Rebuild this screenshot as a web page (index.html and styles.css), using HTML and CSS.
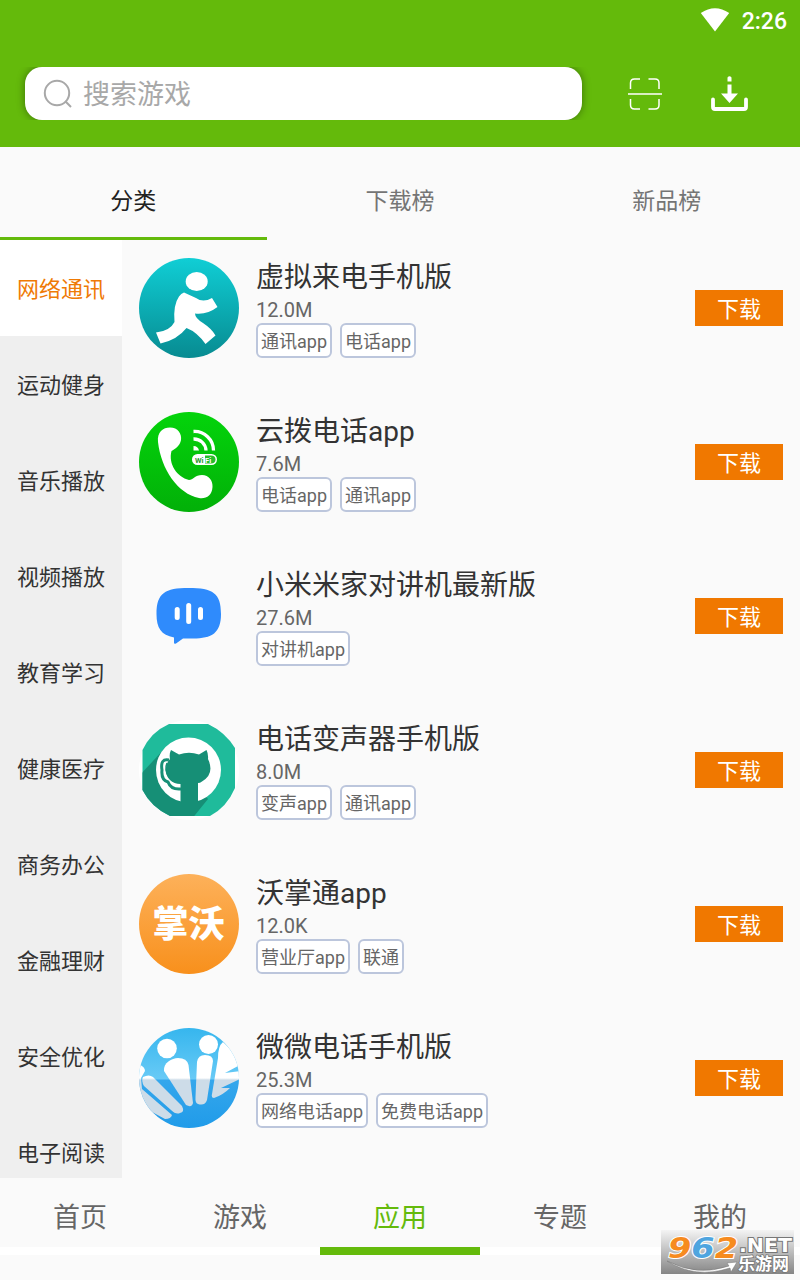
FILE: index.html
```html
<!DOCTYPE html>
<html lang="zh-CN">
<head>
    <meta charset="utf-8">
    <title>应用</title>
    <link rel="stylesheet" href="styles.css">
</head>
<body>
    <header class="header">
        <div class="status">
            <svg width="30" height="24" viewBox="0 0 30 24"><path d="M.8 5Q15-4.500 29.200 5L15 23.500z" fill="#fff"/></svg>
            <span class="clock">2:26</span>
        </div>
        <div class="toolbar">
            <div class="search">
                <svg width="30" height="30" viewBox="0 0 30 30" fill="none" stroke="#a8a8a8" stroke-width="2"><circle cx="14" cy="14" r="12.200"/><path d="M22.300 22.300L28 28"/></svg>
                <span class="hint">搜索游戏</span>
            </div>
            <svg class="scan" width="34" height="34" viewBox="0 0 34 34" fill="none" stroke="#fff" stroke-width="1.500"><path d="M2.500 12V6q0-4 4-4H12M20.500 2H27q4 0 4 4v6M2.500 22v6q0 4 4 4H12M20.500 32H27q4 0 4-4v-6M0 17h34"/></svg>
            <svg class="save" width="38" height="38" viewBox="0 0 38 38"><path d="M2 24.500v7.500q0 2 2 2h29q2 0 2-2v-7.500" fill="none" stroke="#fff" stroke-width="3.800" stroke-linecap="round"/><path d="M16.500 2.500q2-2.500 4 0v4h-4zM16.500 9.500h4v9h6.500L18.500 28l-8.500-9.500h6.500z" fill="#fff"/></svg>
        </div>
    </header>

    <nav class="tabs">
        <div class="tab active">分类</div>
        <div class="tab">下载榜</div>
        <div class="tab">新品榜</div>
    </nav>

    <main class="content">
        <aside class="sidebar">
            <div class="cat active">网络通讯</div>
            <div class="cat">运动健身</div>
            <div class="cat">音乐播放</div>
            <div class="cat">视频播放</div>
            <div class="cat">教育学习</div>
            <div class="cat">健康医疗</div>
            <div class="cat">商务办公</div>
            <div class="cat">金融理财</div>
            <div class="cat">安全优化</div>
            <div class="cat">电子阅读</div>
        </aside>
        <section class="list">
            <div class="app">
                <svg class="icon" viewBox="0 0 100 100">
                    <defs><linearGradient id="teal" x2="0" y2="1"><stop offset="0" stop-color="#10ced5"/><stop offset="1" stop-color="#078b91"/></linearGradient></defs>
                    <circle cx="50" cy="50" r="50" fill="url(#teal)"/>
                    <ellipse cx="57.700" cy="23.500" rx="11" ry="9.500" fill="#fff"/>
                    <path d="M45 34.500L57 40Q64 45 73 40L78.500 49Q68 57 56 55.500Q56 60 64 65Q73 71 76.500 77.500L66.500 86Q58 74 47.500 70Q38 82 21.500 85.500L17 74.500Q31 73 35.500 64Q34 47 40 38.500Q42 35.500 45 34.500z" fill="#fff"/>
                </svg>
                <div class="info">
                    <div class="name">虚拟来电手机版</div>
                    <div class="size">12.0M</div>
                    <div class="tags"><span class="tag">通讯app</span><span class="tag">电话app</span></div>
                </div>
                <div class="btn">下载</div>
            </div>
            <div class="app">
                <svg class="icon" viewBox="0 0 100 100">
                    <defs><linearGradient id="green" x2="0" y2="1"><stop offset="0" stop-color="#04d40b"/><stop offset="1" stop-color="#02b008"/></linearGradient></defs>
                    <circle cx="50" cy="50" r="50" fill="url(#green)"/>
                    <path d="M19 30C18 20 24 15.500 31 15.500C39 15.500 43 22 42 28C41 34 36 37 32.500 39C29 52 38 65 50 68C54 68 56 63 63 63C70 63 74 69 73.500 75C73 84 67 87 60 86C39 82 22 57 19 30z" fill="#fff"/>
                    <g fill="none" stroke="#fff" stroke-width="3.300"><path d="M54.500 19.500A19 19 0 0 1 74.500 38.500M54.500 27A12 12 0 0 1 67 38.500"/></g>
                    <path d="M54.500 34Q59 34 60 38.500H54.500z" fill="#fff"/>
                    <rect x="53" y="42" width="25" height="11" rx="5.500" fill="#fff"/>
                    <path d="M66 43.500h6q4.500 0 4.500 4t-4.500 4h-6z" fill="#28bd2b"/>
                    <text x="56" y="50.500" class="wifi" fill="#299b2c">Wi<tspan dx="1.500" fill="#fff">Fi</tspan></text>
                </svg>
                <div class="info">
                    <div class="name">云拨电话app</div>
                    <div class="size">7.6M</div>
                    <div class="tags"><span class="tag">电话app</span><span class="tag">通讯app</span></div>
                </div>
                <div class="btn">下载</div>
            </div>
            <div class="app">
                <svg class="icon" viewBox="0 0 100 100">
                    <path d="M49.500 22C74 22 82 27 82 48C82 67 73 72.500 54 72.500H44L37 77.500Q35 78.500 35 76.500V71.500C22 69 17.500 62 17.500 48C17.500 27 26 22 49.500 22z" fill="#2f8bfc"/>
                    <path d="M38.200 43.500v8M49.700 39.500v16M61.500 43.500v8" fill="none" stroke="#fff" stroke-width="5" stroke-linecap="round"/>
                </svg>
                <div class="info">
                    <div class="name">小米米家对讲机最新版</div>
                    <div class="size">27.6M</div>
                    <div class="tags"><span class="tag">对讲机app</span></div>
                </div>
                <div class="btn">下载</div>
            </div>
            <div class="app">
                <svg class="icon" viewBox="0 0 100 100">
                    <defs><clipPath id="oct"><path d="M30 4h39Q86 12 96 28v40Q88 87 71 96H31Q12 87 3.500 70V30Q12 12 30 4z"/></clipPath></defs>
                    <circle cx="50" cy="50" r="50" fill="#fff"/>
                    <g clip-path="url(#oct)">
                        <path d="M0 0h100v100H0z" fill="#1fbb9b"/>
                        <path d="M0 56L27 27 69 79 52 100H0z" fill="#168f76"/>
                    </g>
                    <circle cx="49.500" cy="50" r="32.500" fill="#fff"/>
                    <path d="M32 30L40 34.500Q50 31 60 34.500L67.500 30Q69.500 34 69 39Q76 54 63 61.500Q61 63 59 63V84H41.500V64Q35 64 31 60C25 54 26 44 31 39Q30 34 32 30z" fill="#168f76"/>
                    <path d="M30 40Q21 38 23 50Q22 60 29 62Q32 70 42 69" fill="none" stroke="#168f76" stroke-width="3"/>
                    <path d="M28 43Q25 50 30 57" fill="none" stroke="#168f76" stroke-width="1.500"/>
                </svg>
                <div class="info">
                    <div class="name">电话变声器手机版</div>
                    <div class="size">8.0M</div>
                    <div class="tags"><span class="tag">变声app</span><span class="tag">通讯app</span></div>
                </div>
                <div class="btn">下载</div>
            </div>
            <div class="app">
                <svg class="icon" viewBox="0 0 100 100">
                    <defs><linearGradient id="orange" x2="0" y2="1"><stop offset="0" stop-color="#fdb15a"/><stop offset="1" stop-color="#f8901c"/></linearGradient></defs>
                    <circle cx="50" cy="50" r="50" fill="url(#orange)"/>
                    <text x="13.500" y="63" class="wo">掌沃</text>
                </svg>
                <div class="info">
                    <div class="name">沃掌通app</div>
                    <div class="size">12.0K</div>
                    <div class="tags"><span class="tag">营业厅app</span><span class="tag">联通</span></div>
                </div>
                <div class="btn">下载</div>
            </div>
            <div class="app">
                <svg class="icon" viewBox="0 0 100 100">
                    <defs>
                        <linearGradient id="sky" x2="0" y2="1"><stop offset="0" stop-color="#36b6ee"/><stop offset=".51" stop-color="#68caf6"/><stop offset=".52" stop-color="#35a7ec"/><stop offset="1" stop-color="#209be9"/></linearGradient>
                        <linearGradient id="shade" gradientUnits="userSpaceOnUse" x1="0" y1="0" x2="0" y2="100"><stop offset=".5" stop-color="#fff"/><stop offset=".52" stop-color="#cddce8"/></linearGradient>
                        <clipPath id="round"><circle cx="50" cy="50" r="50"/></clipPath>
                    </defs>
                    <g clip-path="url(#round)">
                        <path d="M0 0h100v100H0z" fill="url(#sky)"/>
                        <g fill="url(#shade)">
                            <circle cx="28" cy="20.500" r="9.800"/><circle cx="69.500" cy="16.500" r="9.500"/>
                            <path d="M25 43C24 35 33 30 39 30Q48 30 49.500 37L54 75Q53 80 47 77z"/>
                            <path d="M58 34Q59 27 66 27Q74 27 74 33L68 72Q66 78 59 76Q56 75 56.500 69z"/>
                            <path d="M4 49Q10 46 14 49L43 78Q46 84 41 85Q37 87 32 82L5 58Q2 53 4 49z"/>
                            <path d="M-2 36Q6 38 6 43L2 50 3 61 33 87Q32 91 26 91L13 84 21 93-3 96z"/>
                            <path d="M84 14L101 30V37L86 45 101 43V51L82 60 91 60Q84 67 75 70Q72 70 73 66L79 30Q79 18 84 14z"/>
                        </g>
                    </g>
                </svg>
                <div class="info">
                    <div class="name">微微电话手机版</div>
                    <div class="size">25.3M</div>
                    <div class="tags"><span class="tag">网络电话app</span><span class="tag">免费电话app</span></div>
                </div>
                <div class="btn">下载</div>
            </div>
        </section>
    </main>

    <footer class="bottom">
        <div class="nav">首页</div>
        <div class="nav">游戏</div>
        <div class="nav active">应用</div>
        <div class="nav">专题</div>
        <div class="nav">我的</div>
    </footer>

    <svg class="watermark" width="133" height="44" viewBox="0 0 133 44">
        <defs><linearGradient id="grey" x2="0" y2="1"><stop offset="0" stop-color="#f4f4f4"/><stop offset="1" stop-color="#858585"/></linearGradient></defs>
        <path d="M0 0h133v44H0z" fill="url(#grey)"/>
        <text x="7" y="27.500" class="num" textLength="70" lengthAdjust="spacingAndGlyphs"><tspan fill="#f68b1f">9</tspan><tspan fill="#4fa5df">6</tspan><tspan fill="#f68b1f">2</tspan></text>
        <text x="78" y="22" class="net" textLength="53" lengthAdjust="spacingAndGlyphs">.NET</text>
        <path d="M6 31Q36 47 68 36L66 33 76 32 70 42 69 38Q34 49 6 31z" fill="#fff" stroke="#777" stroke-width=".5"/>
        <text x="77" y="40" class="site" textLength="51">乐游网</text>
    </svg>
</body>
</html>
```
FILE: styles.css
```css
* {
    box-sizing: border-box;
}
body {
    margin: 0;
    width: 800px;
    height: 1280px;
    overflow: hidden;
    display: flex;
    flex-direction: column;
    background: #fafafa;
    color: #333;
    font-family: Roboto, "Noto Sans CJK SC", sans-serif;
}
svg {
    display: block;
    flex: none;
}
.header {
    height: 147px;
    background: #64ba0b;
}
.status {
    height: 40px;
    display: flex;
    justify-content: flex-end;
    align-items: center;
    gap: 12px;
    padding-right: 13px;
}
.clock {
    color: #fff;
    font-size: 23px;
    font-weight: 500;
    line-height: 40px;
    padding-top: 3px;
}
.toolbar {
    display: flex;
    align-items: center;
    margin-top: 27px;
    padding-left: 25px;
}
.search {
    width: 557px;
    height: 53px;
    display: flex;
    align-items: center;
    gap: 10px;
    padding-left: 18px;
    border-radius: 17px;
    background: #fff;
    box-shadow: 0 0 8px rgba(0, 0, 0, 0.4);
    clip-path: inset(0 -10px);
    color: #a8a8a8;
    font-size: 27px;
}
.hint {
    padding-bottom: 2px;
}
.scan {
    margin-left: 46px;
}
.save {
    margin-left: 49px;
}
.tabs {
    display: flex;
    height: 93px;
}
.tab {
    width: 266.67px;
    padding-top: 16px;
    border-bottom: 3px solid transparent;
    text-align: center;
    font-size: 23px;
    line-height: 78px;
    color: #757575;
}
.tab.active {
    border-color: #64ba0b;
    color: #212121;
}
.content {
    display: flex;
    height: 938px;
    overflow: hidden;
}
.sidebar {
    width: 122px;
    background: #efefef;
}
.cat {
    height: 96px;
    padding-top: 2px;
    text-align: center;
    font-size: 22px;
    line-height: 96px;
}
.cat.active {
    background: #fff;
    color: #ef7a05;
}
.list {
    flex: 1;
}
.app {
    display: flex;
    height: 154px;
    padding: 18px 17px 36px;
}
.icon {
    width: 100px;
    height: 100px;
}
.info {
    flex: 1;
    margin-left: 17px;
}
.name {
    height: 38px;
    font-size: 28px;
    line-height: 40px;
}
.size {
    height: 27px;
    font-size: 20px;
    line-height: 28px;
    color: #666;
}
.tags {
    display: flex;
    gap: 8px;
}
.tag {
    height: 35px;
    padding: 0 3px;
    border: 2px solid #bcc6dc;
    border-radius: 6px;
    background: #fff;
    font-size: 18px;
    line-height: 33px;
    color: #666;
}
.btn {
    width: 88px;
    height: 36px;
    margin-top: 32px;
    background: #f07800;
    color: #fff;
    text-align: center;
    font-size: 22px;
    line-height: 40px;
}
.bottom {
    display: flex;
    height: 77px;
}
.nav {
    flex: 1;
    border-bottom: 8px solid #fff;
    text-align: center;
    font-size: 27px;
    line-height: 80px;
    color: #666;
}
.nav.active {
    border-color: #64ba0b;
    color: #64ba0b;
}
.wifi {
    font-size: 7.5px;
    font-weight: bold;
}
.wo {
    fill: #fff;
    font-size: 36px;
    font-weight: 900;
}
/* site badge over the bottom bar */
.watermark {
    position: absolute;
    left: 661px;
    top: 1230px;
}
.num {
    font: italic bold 29px "DejaVu Sans", sans-serif;
    stroke: #fff;
    stroke-width: 2px;
    paint-order: stroke;
}
.net {
    font: bold 19px "DejaVu Sans", sans-serif;
    fill: #fff;
    stroke: #777;
    stroke-width: 2px;
    paint-order: stroke;
}
.site {
    font-size: 17px;
    font-weight: bold;
    fill: #fff;
    stroke: #777;
    stroke-width: 1.5px;
    paint-order: stroke;
}
```
